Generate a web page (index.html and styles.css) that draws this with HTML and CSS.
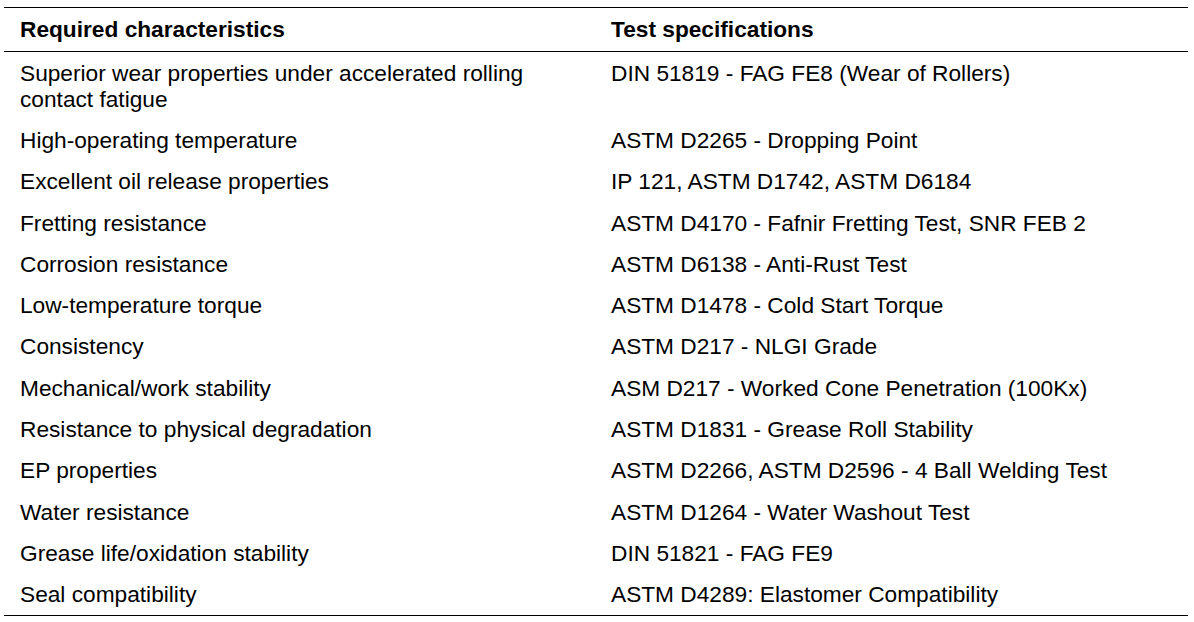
FILE: index.html
```html
<!DOCTYPE html>
<html>
<head>
<meta charset="utf-8">
<link rel="stylesheet" href="styles.css">
</head>
<body>
<table class="spec-table">
  <thead>
    <tr>
      <th class="col-char">Required characteristics</th>
      <th class="col-test">Test specifications</th>
    </tr>
  </thead>
  <tbody>
    <tr><td>Superior wear properties under accelerated rolling<br>contact fatigue</td><td>DIN 51819 - FAG FE8 (Wear of Rollers)</td></tr>
    <tr><td>High-operating temperature</td><td>ASTM D2265 - Dropping Point</td></tr>
    <tr><td>Excellent oil release properties</td><td>IP 121, ASTM D1742, ASTM D6184</td></tr>
    <tr><td>Fretting resistance</td><td>ASTM D4170 - Fafnir Fretting Test, SNR FEB 2</td></tr>
    <tr><td>Corrosion resistance</td><td>ASTM D6138 - Anti-Rust Test</td></tr>
    <tr><td>Low-temperature torque</td><td>ASTM D1478 - Cold Start Torque</td></tr>
    <tr><td>Consistency</td><td>ASTM D217 - NLGI Grade</td></tr>
    <tr><td>Mechanical/work stability</td><td>ASM D217 - Worked Cone Penetration (100Kx)</td></tr>
    <tr><td>Resistance to physical degradation</td><td>ASTM D1831 - Grease Roll Stability</td></tr>
    <tr><td>EP properties</td><td>ASTM D2266, ASTM D2596 - 4 Ball Welding Test</td></tr>
    <tr><td>Water resistance</td><td>ASTM D1264 - Water Washout Test</td></tr>
    <tr><td>Grease life/oxidation stability</td><td>DIN 51821 - FAG FE9</td></tr>
    <tr><td>Seal compatibility</td><td>ASTM D4289: Elastomer Compatibility</td></tr>
  </tbody>
</table>
</body>
</html>
```
FILE: styles.css
```css
html, body {
  margin: 0;
  padding: 0;
  background: #fff;
}
body {
  font-family: "Liberation Sans", Arial, sans-serif;
  color: #000;
}
.spec-table {
  margin: 7px 0 0 4px;
  width: 1184px;
  border-collapse: collapse;
  table-layout: fixed;
  font-size: 22.7px;
  line-height: 26px;
}
.spec-table th,
.spec-table td {
  text-align: left;
  vertical-align: top;
  padding: 7.7px 10px 7.6px 16px;
}
.spec-table th {
  font-weight: bold;
  padding-top: 8px;
  padding-bottom: 9px;
}
.spec-table thead tr {
  border-top: 1px solid #000;
  border-bottom: 1px solid #000;
}
.spec-table tbody tr:last-child {
  border-bottom: 1px solid #000;
}
.col-char {
  width: 565px;
}
```
